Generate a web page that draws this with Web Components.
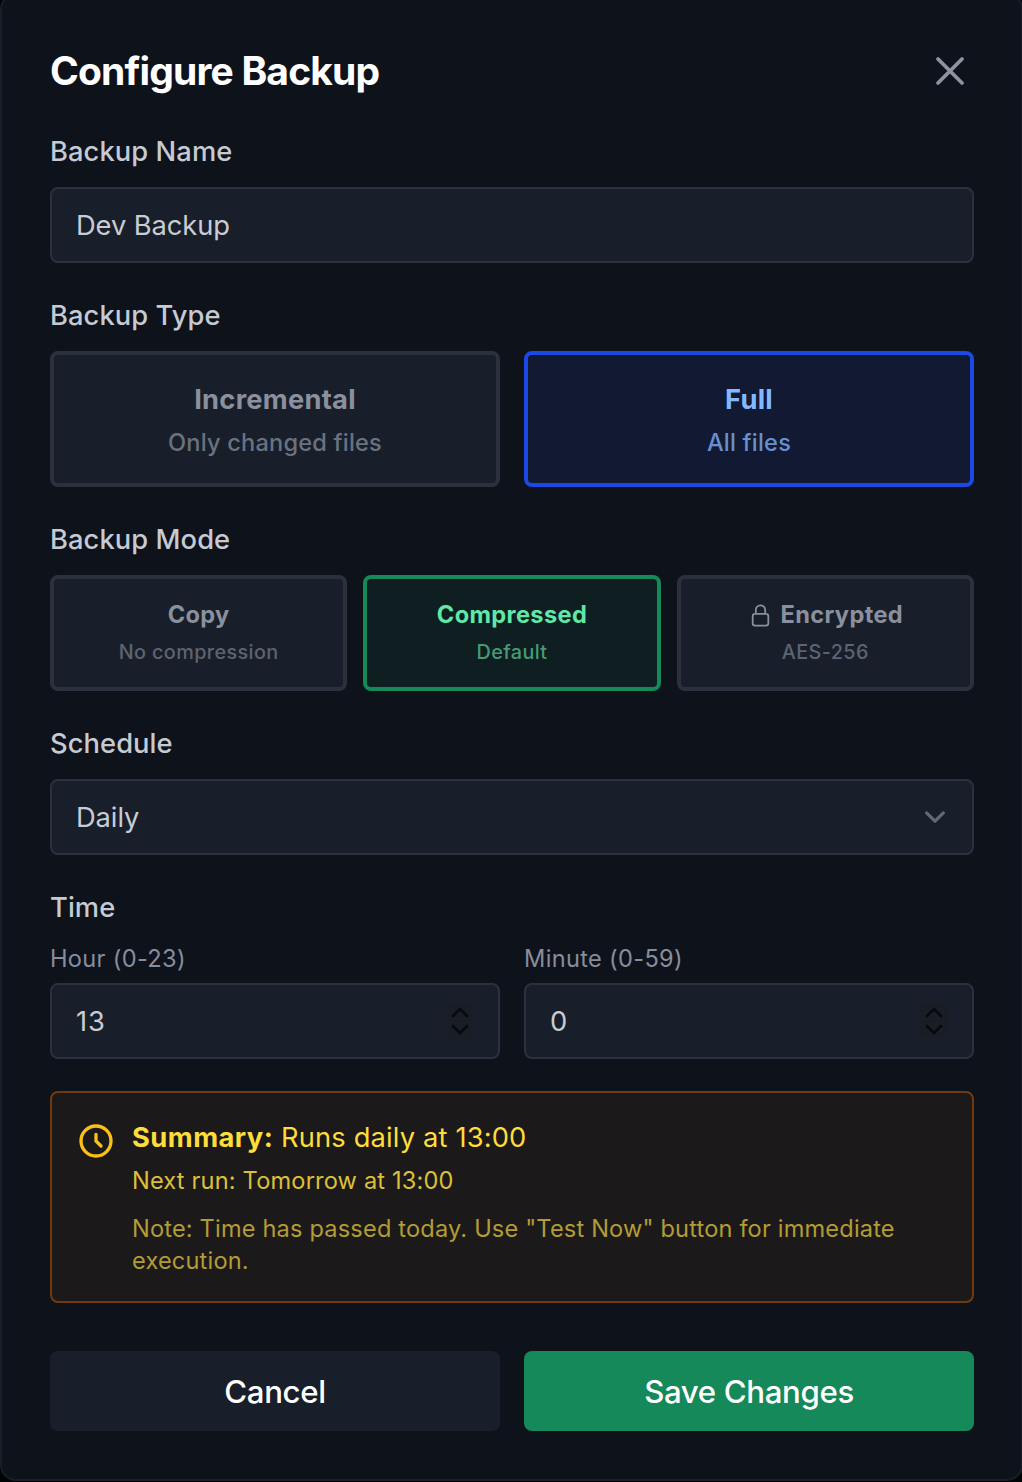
<!DOCTYPE html>
<html lang="en">
<head>
<meta charset="utf-8">
<title>Configure Backup</title>
<style>
    html, body {
        margin: 0;
        background: #020305;
        overflow: hidden;
        height: 1482px;
    }

    body {
        font-family: Inter, "Liberation Sans", sans-serif;
        -webkit-font-smoothing: antialiased;
    }
</style>
</head>
<body>

<backup-dialog>
    <span slot="title">Configure Backup</span>

    <form-field label="Backup Name">
        <text-box>Dev Backup</text-box>
    </form-field>

    <form-field label="Backup Type">
        <option-row style="--gap: 24px; --columns: 2">
            <option-card>Incremental<span slot="hint">Only changed files</span></option-card>
            <option-card tone="blue">Full<span slot="hint">All files</span></option-card>
        </option-row>
    </form-field>

    <form-field label="Backup Mode">
        <option-row style="--gap: 16px; --columns: 3">
            <option-card size="small">Copy<span slot="hint">No compression</span></option-card>
            <option-card size="small" tone="green">Compressed<span slot="hint">Default</span></option-card>
            <option-card size="small"><ui-icon slot="icon" name="lock" style="--size: 25px"></ui-icon>Encrypted<span slot="hint">AES-256</span></option-card>
        </option-row>
    </form-field>

    <form-field label="Schedule">
        <text-box kind="select">Daily</text-box>
    </form-field>

    <form-field label="Time">
        <option-row style="--gap: 24px; --columns: 2">
            <number-field label="Hour (0-23)">13</number-field>
            <number-field label="Minute (0-59)">0</number-field>
        </option-row>
    </form-field>

    <summary-box>
        <span slot="title">Summary:</span>
        <span slot="text">Runs daily at 13:00</span>
        <span slot="next">Next run: Tomorrow at 13:00</span>
        <span slot="note">Note: Time has passed today. Use "Test Now" button for immediate execution.</span>
    </summary-box>

    <action-button slot="actions">Cancel</action-button>
    <action-button slot="actions" primary>Save Changes</action-button>
</backup-dialog>

<script>
// Base class: every component only has styles and a template
class BaseElement extends HTMLElement {
    constructor() {
        super();
        this.attachShadow({ mode: 'open' });
    }

    connectedCallback() {
        this.shadowRoot.innerHTML = `<style>${this.styles}</style>${this.template}`;
    }
}

const ICONS = {
    close: { box: 24, width: 1.9, body: '<path d="M6 18L18 6M6 6l12 12"/>' },
    chevron: { box: 20, width: 1.5, body: '<path d="M6 8l4 4 4-4"/>' },
    clock: { box: 24, width: 2, body: '<circle cx="12" cy="12" r="9"/><path d="M12 8v4l3 3"/>' },
    lock: {
        box: 24,
        width: 1.7,
        body: '<path d="M16.5 10.5V6.75a4.5 4.5 0 1 0-9 0v3.75m-.75 11.25h10.5a2.25 2.25 0 0 0 2.25-2.25v-6.75a2.25 2.25 0 0 0-2.25-2.25H6.75a2.25 2.25 0 0 0-2.25 2.25v6.75a2.25 2.25 0 0 0 2.25 2.25z"/>'
    }
};

class UiIcon extends BaseElement {
    get styles() {
        return `
            :host {
                display: block;
                flex: none;
                width: var(--size);
                height: var(--size);
            }

            svg {
                display: block;
                width: 100%;
                height: 100%;
            }
        `;
    }

    get template() {
        const icon = ICONS[this.getAttribute('name')];
        return `
            <svg viewBox="0 0 ${icon.box} ${icon.box}" fill="none" stroke="currentColor"
                stroke-width="${icon.width}" stroke-linecap="round" stroke-linejoin="round">${icon.body}</svg>
        `;
    }
}

class BackupDialog extends BaseElement {
    get styles() {
        return `
            :host {
                display: block;
                box-sizing: border-box;
                width: 1023px;
                height: 1488px;
                margin-top: -7px;
                padding: 48px 47px 48px 48px;
                border: 2px solid #171e28;
                border-radius: 16px;
                background: #0e121b;
            }

            header {
                display: flex;
                align-items: center;
                justify-content: space-between;
                height: 56px;
                margin-bottom: 32px;
            }

            h2 {
                margin: 0;
                color: #fff;
                font-size: 39px;
                font-weight: 650;
                letter-spacing: -0.84px;
                line-height: 56px;
            }

            ui-icon {
                --size: 48px;
                color: #8c93a1;
            }

            .fields {
                display: flex;
                flex-direction: column;
                gap: 32px;
            }

            footer {
                display: grid;
                grid-template-columns: 1fr 1fr;
                gap: 24px;
                margin-top: 48px;
            }
        `;
    }

    get template() {
        return `
            <header>
                <h2><slot name="title"></slot></h2>
                <ui-icon name="close"></ui-icon>
            </header>
            <div class="fields"><slot></slot></div>
            <footer><slot name="actions"></slot></footer>
        `;
    }
}

class FormField extends BaseElement {
    get styles() {
        return `
            :host {
                display: block;
            }

            .label {
                margin-bottom: 16px;
                padding-top: 2px;
                color: #c5cad3;
                font-size: 27.3px;
                font-weight: 550;
                letter-spacing: 0.08px;
                line-height: 38px;
            }
        `;
    }

    get template() {
        return `<div class="label">${this.getAttribute('label')}</div><slot></slot>`;
    }
}

class TextBox extends BaseElement {
    get styles() {
        return `
            :host {
                display: flex;
                align-items: center;
                justify-content: space-between;
                box-sizing: border-box;
                height: 76px;
                padding: 0 16px 0 24px;
                border: 2px solid #2a313d;
                border-radius: 8px;
                background: #191f2a;
                color: #c8ccd4;
                font-size: 27.3px;
                font-weight: 440;
                letter-spacing: -0.08px;
                line-height: 38px;
            }

            span {
                padding-top: 2px;
            }

            ui-icon {
                --size: 42px;
                color: #626977;
            }
        `;
    }

    get template() {
        const arrow = this.getAttribute('kind') === 'select' ? '<ui-icon name="chevron"></ui-icon>' : '';
        return `<span><slot></slot></span>${arrow}`;
    }
}

class OptionRow extends BaseElement {
    get styles() {
        return `
            :host {
                display: grid;
                grid-template-columns: repeat(var(--columns), minmax(0, 1fr));
                gap: var(--gap);
            }
        `;
    }

    get template() {
        return '<slot></slot>';
    }
}

class OptionCard extends BaseElement {
    get styles() {
        return `
            :host {
                display: block;
                box-sizing: border-box;
                height: 136px;
                padding: 24px;
                border: 4px solid #2a313d;
                border-radius: 8px;
                background: #191f2a;
                color: #8a909e;
                text-align: center;
            }

            .title {
                display: flex;
                align-items: center;
                justify-content: center;
                gap: 8px;
                padding-top: 2px;
                font-size: 27.3px;
                font-weight: 660;
                letter-spacing: 0.24px;
                line-height: 38px;
            }

            .hint {
                margin-top: 8px;
                color: #697280;
                font-size: 23.6px;
                font-weight: 520;
                letter-spacing: 0.2px;
                line-height: 32px;
            }

            :host([size="small"]) {
                height: 116px;
                padding: 20px;
            }

            :host([size="small"]) .title {
                height: 32px;
                padding-top: 0;
                font-size: 23.6px;
                letter-spacing: 0.35px;
                line-height: 32px;
            }

            :host([size="small"]) .hint {
                margin-top: 5px;
                color: #5d6471;
                font-size: 19.8px;
                letter-spacing: 0.4px;
            }

            :host([tone="blue"]) {
                border-color: #1c48e6;
                background: #121932;
                color: #84b8ff;
            }

            :host([tone="blue"]) .hint {
                color: #6690cf;
            }

            :host([tone="green"]) {
                border-color: #158957;
                background: #0f1e21;
                color: #5fe8a8;
            }

            :host([tone="green"]) .hint {
                color: #449b76;
            }
        `;
    }

    get template() {
        return `
            <div class="title"><slot name="icon"></slot><span><slot></slot></span></div>
            <div class="hint"><slot name="hint"></slot></div>
        `;
    }
}

class NumberField extends BaseElement {
    get styles() {
        return `
            :host {
                display: block;
            }

            .label {
                margin-bottom: 8px;
                color: #868d9b;
                font-size: 23.6px;
                font-weight: 430;
                letter-spacing: 0.33px;
                line-height: 32px;
            }

            .box {
                display: flex;
                align-items: center;
                justify-content: space-between;
                box-sizing: border-box;
                height: 76px;
                padding: 0 24px;
                border: 2px solid #2a313d;
                border-radius: 8px;
                background: #191f2a;
                color: #c8ccd4;
                font-size: 27.3px;
                font-weight: 440;
                letter-spacing: 0.9px;
                line-height: 38px;
            }

            span {
                padding-top: 2px;
            }

            svg {
                display: block;
                width: 28px;
                height: 34px;
            }
        `;
    }

    get template() {
        return `
            <div class="label">${this.getAttribute('label')}</div>
            <div class="box">
                <span><slot></slot></span>
                <svg viewBox="0 0 28 34" fill="none">
                    <rect width="28" height="34" rx="7" fill="#181d26"/>
                    <path d="M5 17h18" stroke="#151a22"/>
                    <path d="M7 12l7-7 7 7M7 22l7 7 7-7" stroke="#07090c" stroke-width="2.6" stroke-linecap="round" stroke-linejoin="round"/>
                </svg>
            </div>
        `;
    }
}

class SummaryBox extends BaseElement {
    get styles() {
        return `
            :host {
                display: flex;
                gap: 16px;
                box-sizing: border-box;
                height: 212px;
                padding: 24px;
                border: 2px solid #733a10;
                border-radius: 8px;
                background: #1c191b;
            }

            ui-icon {
                --size: 40px;
                margin-top: 4px;
                color: #f9c116;
            }

            .main {
                padding-top: 2px;
                color: #fddd3a;
                font-size: 27.3px;
                font-weight: 440;
                letter-spacing: 0.15px;
                line-height: 38px;
            }

            strong {
                font-weight: 740;
                letter-spacing: 0.45px;
            }

            .next, .note {
                margin-top: 8px;
                color: #dcc037;
                font-size: 23.6px;
                font-weight: 440;
                letter-spacing: 0.17px;
                line-height: 32px;
            }

            .note {
                margin-top: 16px;
                color: #b39c34;
            }
        `;
    }

    get template() {
        return `
            <ui-icon name="clock"></ui-icon>
            <div>
                <div class="main"><strong><slot name="title"></slot></strong> <slot name="text"></slot></div>
                <div class="next"><slot name="next"></slot></div>
                <div class="note"><slot name="note"></slot></div>
            </div>
        `;
    }
}

class ActionButton extends BaseElement {
    get styles() {
        return `
            :host {
                display: flex;
                align-items: center;
                justify-content: center;
                box-sizing: border-box;
                height: 80px;
                padding-top: 2px;
                border-radius: 8px;
                background: #191f2a;
                color: #fff;
                font-size: 31.2px;
                font-weight: 550;
                letter-spacing: -0.35px;
            }

            :host([primary]) {
                background: #158959;
            }
        `;
    }

    get template() {
        return '<span><slot></slot></span>';
    }
}

customElements.define('ui-icon', UiIcon);
customElements.define('backup-dialog', BackupDialog);
customElements.define('form-field', FormField);
customElements.define('text-box', TextBox);
customElements.define('option-row', OptionRow);
customElements.define('option-card', OptionCard);
customElements.define('number-field', NumberField);
customElements.define('summary-box', SummaryBox);
customElements.define('action-button', ActionButton);
</script>
</body>
</html>
